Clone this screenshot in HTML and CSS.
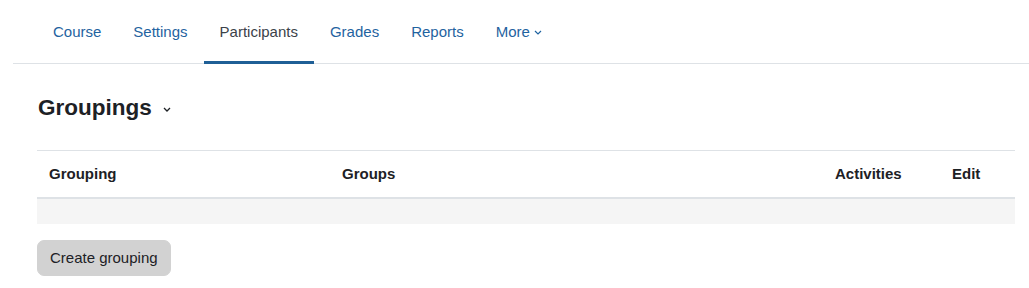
FILE: index.html
```html
<!DOCTYPE html>
<html lang="en">
<head>
<meta charset="utf-8">
<title>Groupings</title>
<link rel="stylesheet" href="styles.css">
</head>
<body>
<div class="page">
  <nav class="secnav">
    <ul class="tabs">
      <li class="tab"><a href="#">Course</a></li>
      <li class="tab"><a href="#">Settings</a></li>
      <li class="tab active"><a href="#">Participants</a></li>
      <li class="tab"><a href="#">Grades</a></li>
      <li class="tab"><a href="#">Reports</a></li>
      <li class="tab"><a href="#">More <svg class="caret" viewBox="0 0 8 5" width="8" height="5"><path d="M1 1l3 3 3-3" fill="none" stroke="currentColor" stroke-width="1.2"/></svg></a></li>
    </ul>
  </nav>
  <main class="content">
    <h2 class="title">Groupings <svg class="title-caret" viewBox="0 0 8 5" width="8" height="5"><path d="M1 1l3 3 3-3" fill="none" stroke="currentColor" stroke-width="1.3"/></svg></h2>
    <table class="grid">
      <thead>
        <tr>
          <th class="c1">Grouping</th>
          <th class="c2">Groups</th>
          <th class="c3">Activities</th>
          <th class="c4">Edit</th>
        </tr>
      </thead>
      <tbody>
        <tr class="empty"><td colspan="4"></td></tr>
      </tbody>
    </table>
    <button class="btn" type="button">Create grouping</button>
  </main>
</div>
</body>
</html>
```
FILE: styles.css
```css
html, body {
  margin: 0;
  padding: 0;
  background: #fff;
}
body {
  font-family: "Liberation Sans", Arial, sans-serif;
  font-size: 15px;
  color: #1d2125;
}
.page {
  padding-left: 13px;
}
.secnav {
  border-bottom: 1px solid #dee2e6;
  height: 63px;
}
.tabs {
  list-style: none;
  margin: 0;
  padding: 0 0 0 24px;
  display: flex;
  height: 64px;
}
.tab {
  display: flex;
  box-sizing: border-box;
  height: 64px;
  border-bottom: 3px solid transparent;
}
.tab a {
  display: flex;
  align-items: center;
  gap: 4px;
  padding: 2px 16px 0;
  color: #1f63a0;
  text-decoration: none;
}
.tab.active {
  border-bottom-color: #1f5f96;
}
.tab.active a {
  color: #3b4249;
}
.caret {
  margin-top: 2px;
}
.content {
  padding: 0 14px 0 24px;
}
.title {
  margin: 30px 0 0 1px;
  font-size: 22.5px;
  font-weight: 700;
  line-height: 27px;
  display: flex;
  align-items: center;
}
.title-caret {
  margin-left: 11px;
  margin-top: 3px;
}
.grid {
  margin-top: 29px;
  width: 978px;
  border-collapse: collapse;
  table-layout: fixed;
}
.grid th {
  text-align: left;
  font-weight: 700;
  padding: 12px;
  line-height: 22px;
  border-top: 1px solid #dee2e6;
  border-bottom: 2px solid #dee2e6;
}
.c1 { width: 269px; }
.c2 { width: 469px; }
.c3 { width: 93px; }
.c4 { width: 51px; }
.empty td {
  background: #f5f5f5;
  padding: 12px;
  height: 1px;
}
.btn {
  display: block;
  margin-top: 16px;
  font-family: inherit;
  font-size: 15px;
  color: #1d2125;
  background: #d2d2d2;
  border: 1px solid #d2d2d2;
  border-radius: 7px;
  padding: 7px 12px;
  line-height: 20px;
}
```
